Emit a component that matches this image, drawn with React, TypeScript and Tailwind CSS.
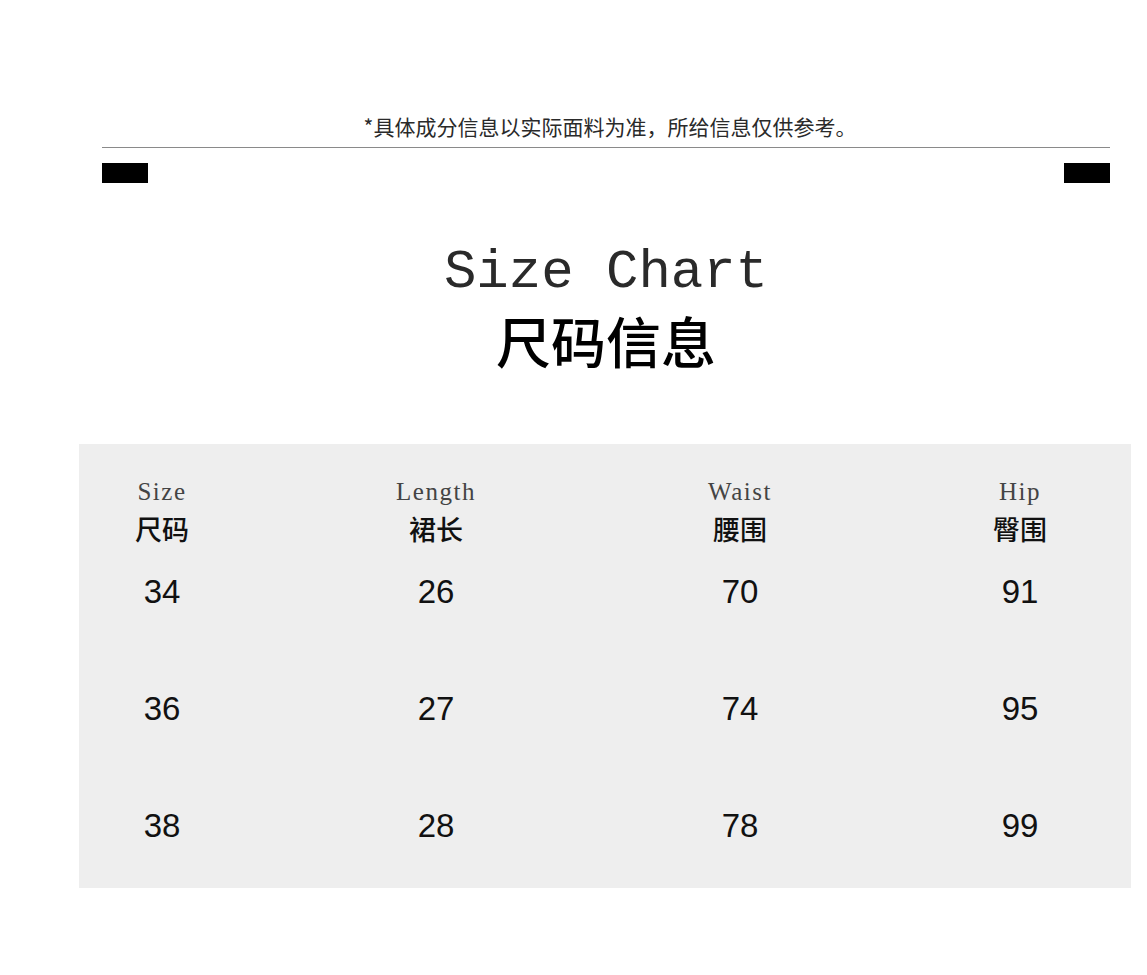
const rows = [
  ['34', '26', '70', '91'],
  ['36', '27', '74', '95'],
  ['38', '28', '78', '99'],
];

const headers = [
  { en: 'Size', zh: '尺码' },
  { en: 'Length', zh: '裙长' },
  { en: 'Waist', zh: '腰围' },
  { en: 'Hip', zh: '臀围' },
];

// column offsets inside the grey table (each column 160px wide)
const colClass = ['ml-[3px]', 'ml-[114px]', 'ml-[144px]', 'ml-[120px]'];

export default function App() {
  return (
    <div className="min-h-[975px] w-full bg-white pt-[112px] pb-[87px] font-['Liberation_Sans','Noto_Sans_CJK_SC',sans-serif]">
      {/* Note + rule */}
      <div className="ml-[102px] w-[1008px]">
        <p className="text-center text-[21px] leading-[28px] text-[#2a2a2a] font-['Noto_Sans_CJK_SC',sans-serif] pl-[8px]">
          *具体成分信息以实际面料为准，所给信息仅供参考。
        </p>
        <div className="mt-[7px] h-px bg-[#8a8a8a]" />
        <div className="mt-[15px] flex justify-between">
          <div className="h-[20px] w-[46px] bg-black" />
          <div className="h-[20px] w-[46px] bg-black" />
        </div>

        {/* Title */}
        <h1 className="mt-[60px] text-center text-[54px] leading-[60px] text-[#2a2a2a] font-['Liberation_Mono',monospace] font-normal">
          Size Chart
        </h1>
        <h2 className="mt-[4px] text-center text-[55px] leading-[64px] text-black font-medium font-['Noto_Sans_CJK_SC',sans-serif]">
          尺码信息
        </h2>
      </div>

      {/* Table */}
      <div className="mt-[73px] ml-[79px] w-[1052px] bg-[#eeeeee] pt-[34px] pb-[44px]">
        <div className="flex">
          {headers.map((h, i) => (
            <div key={h.en} className={`w-[160px] text-center ${colClass[i]}`}>
              <div className="text-[25px] leading-[28px] tracking-[1.5px] text-[#444] font-['Liberation_Serif',serif]">{h.en}</div>
              <div className="mt-[7px] text-[27px] leading-[31px] text-[#111] font-medium font-['Noto_Sans_CJK_SC',sans-serif]">
                {h.zh}
              </div>
            </div>
          ))}
        </div>
        <div className="mt-[29px] flex flex-col gap-[80px]">
          {rows.map((r) => (
            <div key={r[0]} className="flex">
              {r.map((v, i) => (
                <div
                  key={i}
                  className={`w-[160px] text-center text-[33px] leading-[37px] text-[#111] font-['Liberation_Sans',sans-serif] ${colClass[i]}`}
                >
                  {v}
                </div>
              ))}
            </div>
          ))}
        </div>
      </div>
    </div>
  );
}
